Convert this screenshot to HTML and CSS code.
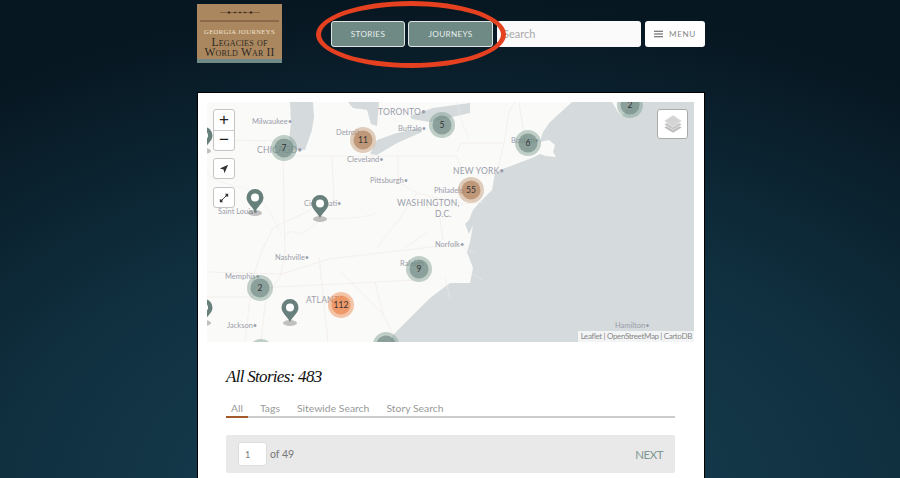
FILE: index.html
```html
<!DOCTYPE html>
<html lang="en">
  <head>
    <meta charset="UTF-8" />
    <meta name="viewport" content="width=device-width, initial-scale=1.0" />
    <title>Georgia Journeys: Legacies of World War II</title>
    <link rel="stylesheet" href="styles.css">
  </head>
  <body>
    <header class="site-header">
      <a class="logo" href="#">
        <svg class="logo-ornament" viewBox="0 0 40 3"><path d="M0 1.500H40" /><circle cx="9" cy="1.500" r="1" /><circle cx="15" cy="1.500" r="0.700" /><circle cx="20" cy="1.500" r="0.700" /><circle cx="25" cy="1.500" r="0.700" /><circle cx="31" cy="1.500" r="1" /></svg>
        <span class="logo-rule"></span>
        <span class="logo-kicker">GEORGIA JOURNEYS</span>
        <span class="logo-title">Legacies of<br />World War II</span>
      </a>
      <nav class="site-nav">
        <a class="nav-btn" href="#">STORIES</a>
        <a class="nav-btn" href="#">JOURNEYS</a>
        <input class="search" type="text" placeholder="Search" />
        <button class="menu-btn" type="button">
          <svg class="menu-icon" viewBox="0 0 10 8"><path d="M0 1h10M0 4h10M0 7h10" /></svg>
          MENU
        </button>
      </nav>
      <span class="callout"></span>
    </header>

    <main class="card">
      <section class="map">
        <svg class="map-canvas" viewBox="0 0 487 240">
          <defs>
            <g id="pin">
              <ellipse class="pin-shadow" cx="0" cy="1" rx="7" ry="3" />
              <path class="pin-body" d="M0 0C-2-5-8.500-9-8.500-14.500A8.500 8.500 0 0 1 8.500-14.500C8.500-9 2-5 0 0Z" />
              <circle class="pin-hole" cx="0" cy="-14.500" r="4" />
            </g>
          </defs>

          <rect class="land" width="487" height="240" />

          <!-- ocean and lakes -->
          <path class="water" d="M365 0L343 20 336 30 333 40 342 38 348 43 346 50 349 55 339 54 333 52 325 56 293 68 288 71 285 88 273 100 266 108 262 118 258 122 262 132 266 123 263 140 260 150 266 166 263 181 243 181 223 196 206 213 186 233 183 240H487V0Z" />
          <path class="water" d="M83 0L106 0 107 15 105 28 98 48 86 48 82 40 84 20Z" />
          <path class="water" d="M141 0L146 6 160 8 164 22 170 24 172 0Z" />
          <path class="water" d="M170 38L190 31 213 26 215 30 190 41 170 53 163 52Z" />
          <path class="water" d="M203 14L226 6 263 1 263 11 223 20 205 17Z" />
          <path class="land-patch" d="M405 0L411 10 415 14 425 0Z" />

          <!-- state lines and rivers -->
          <g class="borders">
            <path d="M0 38L81 39M76 54L78 155 73 175 62 190M78 54L174 54M174 54L191 54 191 80 210 91M125 54L127 100M127 100L117 108 108 103 100 110 82 118 66 126 56 146M56 146L46 175 42 205 38 240" />
            <path d="M0 170L75 172 122 157 216 146 258 142M112 155L121 240M52 186L168 180 211 178M168 180L176 212 190 240M134 170L176 212M60 186L54 240M0 195L46 195" />
            <path d="M191 54H250L256 71M250 50L254 41 297 41 302 10 308 0M290 70L297 41M312 0L318 40M276 100L255 102 210 91 192 118 170 145M232 110L236 138M220 130L198 146" />
          </g>
          <g class="rivers">
            <path d="M0 72C20 88 42 80 56 100S66 118 74 132" />
            <path d="M168 112C130 122 118 110 104 125S86 122 78 134" />
            <path d="M250 0L255 20 262 36M262 170L275 178M255 145L268 151M238 175L243 197" />
          </g>

          <!-- place labels -->
          <g class="labels">
            <text x="45" y="22">Milwaukee•</text>
            <text class="label-lg" x="50" y="51">CHICAGO•</text>
            <text x="129" y="33">Detroit</text>
            <text class="label-lg" x="171" y="13">TORONTO•</text>
            <text x="191" y="29">Buffalo•</text>
            <text x="140" y="60">Cleveland•</text>
            <text x="163" y="81">Pittsburgh•</text>
            <text class="label-lg" x="190" y="104">WASHINGTON,</text>
            <text class="label-lg" x="228" y="115">D.C.</text>
            <text x="227" y="91">Philadelphia</text>
            <text class="label-lg" x="246" y="72">NEW YORK•</text>
            <text x="304" y="41">Boston•</text>
            <text x="11" y="112">Saint Louis•</text>
            <text x="97" y="104">Cincinnati•</text>
            <text x="68" y="158">Nashville•</text>
            <text x="18" y="177">Memphis•</text>
            <text class="label-lg" x="99" y="201">ATLANTA</text>
            <text x="20" y="226">Jackson•</text>
            <text x="193" y="164">Raleigh</text>
            <text x="228" y="145">Norfolk•</text>
            <text x="408" y="226">Hamilton•</text>
          </g>

          <!-- story pins -->
          <use href="#pin" x="48" y="110" />
          <use href="#pin" x="113" y="116" />
          <use href="#pin" x="83" y="220" />
          <use href="#pin" x="-3" y="48" />
          <use href="#pin" x="-3" y="220" />

          <!-- clusters -->
          <g class="cluster cluster-green">
            <circle cx="77" cy="46" r="13" /><circle class="core" cx="77" cy="46" r="9.500" /><text x="77" y="49">7</text>
            <circle cx="235" cy="23" r="13" /><circle class="core" cx="235" cy="23" r="9.500" /><text x="235" y="26">5</text>
            <circle cx="321" cy="41" r="13" /><circle class="core" cx="321" cy="41" r="9.500" /><text x="321" y="44">6</text>
            <circle cx="423" cy="3" r="13" /><circle class="core" cx="423" cy="3" r="9.500" /><text x="423" y="6">2</text>
            <circle cx="212" cy="167" r="13" /><circle class="core" cx="212" cy="167" r="9.500" /><text x="212" y="170">9</text>
            <circle cx="53" cy="186" r="13" /><circle class="core" cx="53" cy="186" r="9.500" /><text x="53" y="189">2</text>
            <circle cx="179" cy="243" r="13" /><circle class="core" cx="179" cy="243" r="9.500" />
            <circle cx="54" cy="250" r="13" /><circle class="core" cx="54" cy="250" r="9.500" />
          </g>
          <g class="cluster cluster-tan">
            <circle cx="156" cy="38" r="13" /><circle class="core" cx="156" cy="38" r="9.500" /><text x="156" y="41">11</text>
            <circle cx="264" cy="88" r="13" /><circle class="core" cx="264" cy="88" r="9.500" /><text x="264" y="91">55</text>
          </g>
          <g class="cluster cluster-orange">
            <circle cx="134" cy="203" r="13" /><circle class="core" cx="134" cy="203" r="9.500" /><text x="134" y="206">112</text>
          </g>
        </svg>

        <div class="map-controls">
          <div class="control">
            <a class="control-btn control-zoom" href="#">+</a>
            <a class="control-btn control-zoom" href="#">−</a>
          </div>
          <div class="control">
            <a class="control-btn" href="#">
              <svg class="control-icon" viewBox="0 0 12 12"><path d="M11 1L1 5.500 5.500 6.500 6.500 11Z" /></svg>
            </a>
          </div>
          <div class="control">
            <a class="control-btn" href="#">
              <svg class="control-icon" viewBox="0 0 12 12">
                <path d="M7 1H11V5L9.500 3.500 8 5 7 4 8.500 2.500ZM5 11H1V7L2.500 8.500 4 7 5 8 3.500 9.500Z" />
                <path class="control-line" d="M4 8L8 4" />
              </svg>
            </a>
          </div>
        </div>

        <a class="layers-btn" href="#">
          <svg viewBox="0 0 20 20">
            <path class="layer-low" d="M10 8L19 13.500 10 19 1 13.500Z" />
            <path class="layer-mid" d="M10 5L19 10.500 10 16 1 10.500Z" />
            <path class="layer-top" d="M10 1L19 7 10 13 1 7Z" />
          </svg>
        </a>

        <div class="attribution">Leaflet | OpenStreetMap | CartoDB</div>
      </section>

      <section class="stories">
        <h1 class="stories-title">All Stories: 483</h1>
        <ul class="tabs">
          <li class="tab active">All</li>
          <li class="tab">Tags</li>
          <li class="tab">Sitewide Search</li>
          <li class="tab">Story Search</li>
        </ul>
        <div class="pager">
          <div class="pager-left">
            <input class="page-input" type="text" value="1" />
            <span>of 49</span>
          </div>
          <a class="pager-next" href="#">NEXT</a>
        </div>
      </section>
    </main>
  </body>
</html>
```

FILE: styles.css
```css
html,
body {
  height: 100%;
}
body {
  margin: 0;
  overflow: hidden;
  font-family: Lato, "Open Sans", sans-serif;
  background-color: #071722;
  background-image: radial-gradient(ellipse 800px 500px at 50% 105%, #194255 0%, #103040 55%, #071722 100%);
}
a {
  text-decoration: none;
  color: inherit;
}

/* header */
.site-header {
  position: relative;
  width: 508px;
  height: 92px;
  margin-left: 197px;
  display: flex;
  align-items: flex-start;
}
.logo {
  width: 85px;
  height: 59px;
  margin-top: 4px;
  box-sizing: border-box;
  display: flex;
  flex-direction: column;
  align-items: center;
  background-color: #ab875f;
  border-bottom: 4px solid #6f8a87;
  color: #2e2a22;
  font-family: "Liberation Serif", serif;
  text-align: center;
}
.logo-ornament {
  width: 40px;
  height: 3px;
  margin-top: 7px;
  stroke: #3a2e20;
  stroke-width: 0.4;
  fill: #2e2418;
}
.logo-rule {
  width: 79px;
  height: 2px;
  margin-top: 6px;
  background-color: #8a6a49;
}
.logo-kicker {
  margin-top: 5px;
  font-size: 6.600px;
  line-height: 9px;
  letter-spacing: 0.4px;
  color: #f0e4cf;
  white-space: nowrap;
}
.logo-title {
  margin-top: 2px;
  font-size: 11.500px;
  line-height: 9.500px;
  font-variant: small-caps;
  letter-spacing: 0.2px;
  white-space: nowrap;
}
.site-nav {
  margin: 21px 0 0 49px;
  display: flex;
  gap: 3px;
}
.nav-btn {
  height: 26px;
  box-sizing: border-box;
  border: 1px solid #dfe5e3;
  border-radius: 3px;
  background-color: #6f8a85;
  color: #e8eeec;
  font-size: 8.200px;
  letter-spacing: 0.3px;
  line-height: 24px;
  text-align: center;
  width: 74px;
}
.nav-btn + .nav-btn {
  width: 85px;
}
.search {
  width: 144px;
  height: 26px;
  margin-left: 1px;
  box-sizing: border-box;
  padding: 0 6px 2px;
  border: none;
  border-radius: 3px;
  background-color: #fafafa;
  font-family: inherit;
  font-size: 11px;
}
.search::placeholder {
  color: #a9a9a9;
}
.menu-btn {
  width: 60px;
  height: 26px;
  margin-left: 1px;
  padding: 0;
  border: none;
  border-radius: 3px;
  background-color: #fff;
  color: #888;
  font-family: inherit;
  font-size: 8.200px;
  letter-spacing: 0.6px;
  display: flex;
  align-items: center;
  justify-content: center;
  gap: 6px;
}
.menu-icon {
  width: 9px;
  height: 8px;
  stroke: #555;
  stroke-width: 1.200;
}
.callout {
  position: absolute;
  left: 119px;
  top: 1px;
  width: 180px;
  height: 57px;
  border: 5px solid #e5401f;
  border-radius: 50%;
}

/* card */
.card {
  width: 506px;
  margin-left: 197px;
  padding: 9px 0 0;
  border: 1px solid #000;
  background-color: #fff;
}

/* map */
.map {
  position: relative;
  width: 487px;
  height: 240px;
  margin-left: 9px;
  overflow: hidden;
}
.map-canvas {
  display: block;
  width: 487px;
  height: 240px;
}
.land {
  fill: #fafaf8;
}
.water {
  fill: #d5dadc;
}
.land-patch {
  fill: #fafaf8;
}
.borders path {
  fill: none;
  stroke: #f3ecea;
  stroke-width: 0.8;
}
.rivers path {
  fill: none;
  stroke: #ecedec;
  stroke-width: 0.6;
}
.labels text {
  font-family: Lato, sans-serif;
  font-size: 7.500px;
  fill: #9a9dab;
}
.labels .label-lg {
  font-size: 8.500px;
  letter-spacing: 0.2px;
}
.pin-shadow {
  fill: rgba(60, 60, 60, 0.3);
}
.pin-body {
  fill: #67807c;
}
.pin-hole {
  fill: #fff;
}
.cluster text {
  font-family: Lato, sans-serif;
  font-size: 8.500px;
  text-anchor: middle;
  fill: #333;
}
.cluster-green circle {
  fill: rgba(119, 153, 140, 0.45);
}
.cluster-green .core {
  fill: rgba(105, 130, 125, 0.6);
}
.cluster-tan circle {
  fill: rgba(184, 135, 92, 0.4);
}
.cluster-tan .core {
  fill: rgba(180, 135, 100, 0.75);
}
.cluster-orange circle {
  fill: rgba(236, 130, 70, 0.45);
}
.cluster-orange .core {
  fill: rgba(236, 142, 90, 0.8);
}
.map-controls {
  position: absolute;
  left: 6px;
  top: 7px;
  display: flex;
  flex-direction: column;
  gap: 7px;
}
.control {
  width: 22px;
  box-sizing: border-box;
  border: 1px solid #c4c4c4;
  border-radius: 3px;
  background-color: #fff;
  overflow: hidden;
}
.control:last-child {
  margin-top: 1px;
}
.control-btn {
  height: 19px;
  display: flex;
  align-items: center;
  justify-content: center;
  color: #222;
}
.control-btn + .control-btn {
  border-top: 1px solid #ccc;
}
.control-zoom {
  height: 19.500px;
  font-family: "Liberation Sans", sans-serif;
  font-size: 17px;
}
.control-icon {
  width: 10px;
  height: 10px;
  fill: #333;
}
.control-line {
  stroke: #333;
  stroke-width: 1;
}
.layers-btn {
  position: absolute;
  left: 450px;
  top: 7px;
  width: 31px;
  height: 30px;
  box-sizing: border-box;
  border: 1px solid #aaa;
  border-radius: 3px;
  background-color: #fff;
  display: flex;
  align-items: center;
  justify-content: center;
}
.layers-btn svg {
  width: 20px;
  height: 20px;
}
.layer-low {
  fill: #bbb;
  stroke: #fff;
  stroke-width: 0.5;
}
.layer-mid {
  fill: #c4c4c4;
  stroke: #fff;
  stroke-width: 0.5;
}
.layer-top {
  fill: #d4d4d4;
  stroke: #fff;
  stroke-width: 0.5;
}
.attribution {
  position: absolute;
  right: 0;
  bottom: 0;
  padding: 0 2px 0 3px;
  height: 11px;
  line-height: 11px;
  background-color: rgba(255, 255, 255, 0.7);
  color: #888;
  font-size: 8px;
  letter-spacing: -0.35px;
  white-space: nowrap;
}

/* stories list */
.stories {
  padding: 26px 29px 40px 28px;
}
.stories-title {
  margin: 0;
  font-family: "Liberation Serif", serif;
  font-size: 17px;
  line-height: 18px;
  font-style: italic;
  font-weight: normal;
  letter-spacing: -0.7px;
  color: #111;
}
.tabs {
  list-style: none;
  margin: 15px 0 0;
  padding: 0;
  display: flex;
  gap: 17px;
  border-bottom: 2px solid #ccc;
}
.tab {
  position: relative;
  padding-bottom: 1px;
  font-size: 10.400px;
  line-height: 14px;
  color: #999;
}
.tab.active {
  padding: 0 5px 1px;
  margin-right: -5px;
}
.tab.active::after {
  content: "";
  position: absolute;
  left: 0;
  right: 0;
  bottom: -2px;
  height: 2px;
  background-color: #a35a2b;
}
.pager {
  margin-top: 17px;
  height: 38px;
  padding: 0 12px;
  display: flex;
  align-items: center;
  justify-content: space-between;
  background-color: #e9e9e9;
  border-radius: 2px;
  color: #777;
  font-size: 10.500px;
}
.pager-left {
  display: flex;
  align-items: center;
  gap: 3px;
}
.page-input {
  width: 29px;
  height: 24px;
  box-sizing: border-box;
  padding: 0 6px;
  border: 1px solid #ddd;
  border-radius: 3px;
  background-color: #fff;
  color: #777;
  font-family: inherit;
  font-size: 9px;
}
.pager-next {
  color: #7d9890;
  font-size: 11.500px;
  letter-spacing: -0.5px;
}
```
